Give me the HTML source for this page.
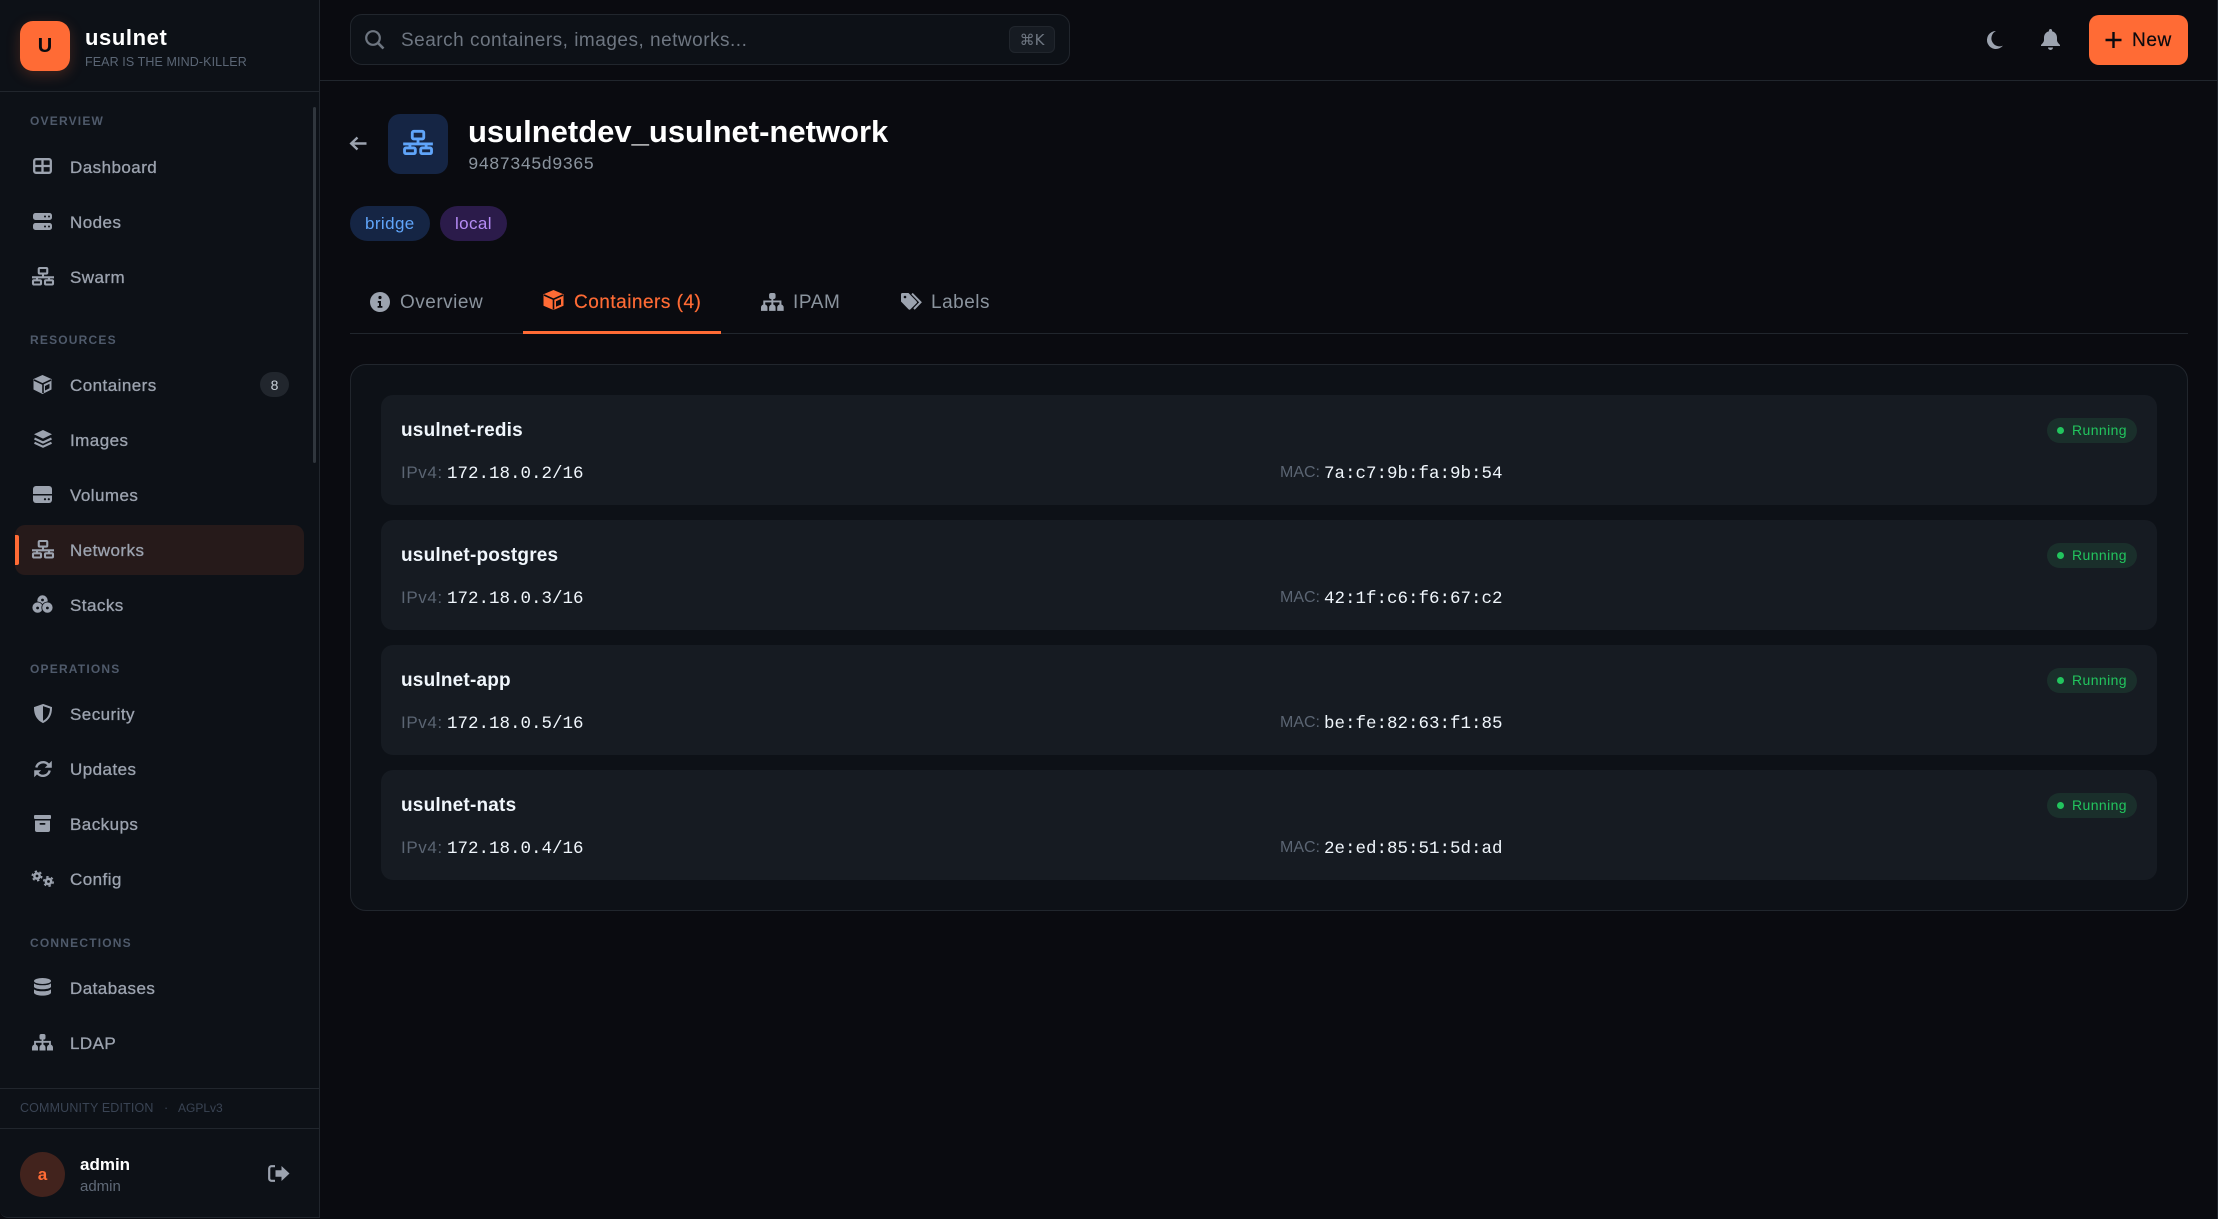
<!DOCTYPE html>
<html lang="en">
<head>
<meta charset="utf-8">
<title>usulnet</title>
<style>
*{box-sizing:border-box;margin:0;padding:0}
html,body{width:2218px;height:1219px;overflow:hidden;background:#0a0b10;font-family:"Liberation Sans",sans-serif;color:#9ca3af}
#app{position:relative;width:2218px;height:1219px;overflow:hidden}
.b{position:absolute}
.t{position:absolute;white-space:nowrap;line-height:24px;height:24px}
.nav{left:70px;font-size:17px;letter-spacing:.45px;color:#9ca3af;-webkit-text-stroke:.3px #9ca3af;margin-top:1px}
.sec{left:30px;font-size:12px;font-weight:700;letter-spacing:1.2px;color:#4f5a6b}
.tab{font-size:19px;color:#8b949e;margin-top:1px}
.name{left:401px;font-size:19px;font-weight:700;letter-spacing:.2px;color:#f0f6fc;margin-top:1px}
.lab{font-size:17px;letter-spacing:.6px;color:#5b6573}
.lab.m{font-size:16px;letter-spacing:0}
.mono{font-family:"Liberation Mono",monospace;font-size:17.5px;color:#f0f6fc;margin-top:1px}
.row{position:absolute;left:381px;width:1776px;height:110px;background:#161b22;border-radius:12px}
.pill{position:absolute;left:2047px;width:90px;height:25px;border-radius:13px;background:#1a2f2b}
.dot{position:absolute;left:2056.5px;width:7px;height:7px;border-radius:50%;background:#22c55e}
.run{left:2072px;font-size:14px;letter-spacing:.4px;color:#22c55e}
</style>
</head>
<body>
<div id="app">
  <!-- sidebar -->
  <aside class="b" style="left:0;top:0;width:320px;height:1218px;background:#0d1117;border-right:1px solid #21262d;border-bottom:1px solid #21262d;border-bottom-left-radius:8px"></aside>
  <div class="b" style="left:0;top:91px;width:319px;height:1px;background:#21262d"></div>
  <div class="b" style="left:0;top:1088px;width:319px;height:1px;background:#21262d"></div>
  <div class="b" style="left:0;top:1128px;width:319px;height:1px;background:#21262d"></div>
  <div class="b" style="left:313px;top:107px;width:3px;height:356px;background:#30363d;border-radius:2px"></div>

  <div class="b" style="left:20px;top:21px;width:50px;height:50px;border-radius:13px;background:#ff6b35;box-shadow:0 4px 14px rgba(255,107,53,.22)"></div>
  <div class="t" style="left:20px;top:34px;width:50px;text-align:center;font-size:20px;font-weight:700;color:#0a0a0f">U</div>
  <div class="t" style="left:85px;top:26px;font-size:22px;font-weight:700;letter-spacing:.6px;color:#fff">usulnet</div>
  <div class="t" style="left:85px;top:50px;font-size:12.5px;letter-spacing:.1px;color:#5b6675">FEAR IS THE MIND-KILLER</div>

  <div class="t sec" style="top:109px">OVERVIEW</div>
  <div class="t nav" style="top:155px">Dashboard</div>
  <div class="t nav" style="top:210px">Nodes</div>
  <div class="t nav" style="top:265px">Swarm</div>

  <div class="t sec" style="top:328px">RESOURCES</div>
  <div class="t nav" style="top:373px">Containers</div>
  <div class="b" style="left:260px;top:372px;width:29px;height:25px;border-radius:13px;background:#21262d"></div>
  <div class="t" style="left:260px;top:373px;width:29px;text-align:center;font-size:14px;color:#c9d1d9">8</div>
  <div class="t nav" style="top:428px">Images</div>
  <div class="t nav" style="top:483px">Volumes</div>
  <div class="b" style="left:15px;top:525px;width:289px;height:50px;border-radius:10px;background:#261a1a"></div>
  <div class="b" style="left:15px;top:535px;width:4px;height:30px;border-radius:0 2px 2px 0;background:#ff6b35"></div>
  <div class="t nav" style="top:538px">Networks</div>
  <div class="t nav" style="top:593px">Stacks</div>

  <div class="t sec" style="top:657px">OPERATIONS</div>
  <div class="t nav" style="top:702px">Security</div>
  <div class="t nav" style="top:757px">Updates</div>
  <div class="t nav" style="top:812px">Backups</div>
  <div class="t nav" style="top:867px">Config</div>

  <div class="t sec" style="top:931px">CONNECTIONS</div>
  <div class="t nav" style="top:976px">Databases</div>
  <div class="t nav" style="top:1031px">LDAP</div>

  <div class="t" style="left:20px;top:1096px;font-size:12.5px;letter-spacing:.15px;color:#3a4454">COMMUNITY EDITION</div>
  <div class="t" style="left:164px;top:1096px;font-size:12.5px;color:#3a4454">·</div>
  <div class="t" style="left:178px;top:1096px;font-size:12px;color:#3a4454">AGPLv3</div>

  <div class="b" style="left:20px;top:1152px;width:45px;height:45px;border-radius:50%;background:#42231d"></div>
  <div class="t" style="left:20px;top:1163px;width:45px;text-align:center;font-size:17px;font-weight:700;color:#ff6b35">a</div>
  <div class="t" style="left:80px;top:1153px;font-size:17px;font-weight:700;color:#fff">admin</div>
  <div class="t" style="left:80px;top:1175px;font-size:15px;color:#5f6977">admin</div>

  <!-- top bar -->
  <div class="b" style="left:320px;top:80px;width:1898px;height:1px;background:#21262d"></div>
  <div class="b" style="left:2217px;top:0;width:1px;height:1219px;background:#21262d"></div>
  <div class="b" style="left:350px;top:14px;width:720px;height:51px;border-radius:12px;background:#0d1117;border:1px solid #21262d"></div>
  <div class="t" style="left:401px;top:29px;font-size:19px;letter-spacing:.5px;color:#6e7681">Search containers, images, networks...</div>
  <div class="b" style="left:1009px;top:26px;width:46px;height:27px;border-radius:6px;background:#161b22;border:1px solid #21262d"></div>
  <div class="t" style="left:1009px;top:28px;width:46px;text-align:center;font-size:15px;font-family:'DejaVu Sans',sans-serif;color:#6e7681">⌘K</div>
  <div class="b" style="left:2089px;top:15px;width:99px;height:50px;border-radius:10px;background:#ff6b35"></div>
  <div class="t" style="left:2132px;top:29px;font-size:19px;letter-spacing:.6px;color:#0a0a0f;-webkit-text-stroke:.2px #0a0a0f">New</div>

  <!-- page header -->
  <div class="b" style="left:388px;top:114px;width:60px;height:60px;border-radius:12px;background:#152544"></div>
  <div class="t" style="left:468px;top:120px;font-size:31px;font-weight:700;color:#fff">usulnetdev_usulnet-network</div>
  <div class="t mono" style="left:468px;top:152px;color:#8b949e">9487345d9365</div>
  <div class="b" style="left:350px;top:206px;width:80px;height:35px;border-radius:18px;background:#152544"></div>
  <div class="t" style="left:365px;top:212px;font-size:17px;letter-spacing:.4px;color:#60a5fa">bridge</div>
  <div class="b" style="left:440px;top:206px;width:67px;height:35px;border-radius:18px;background:#2b1b4a"></div>
  <div class="t" style="left:455px;top:212px;font-size:17px;letter-spacing:.4px;color:#b68cf5">local</div>

  <!-- tabs -->
  <div class="b" style="left:350px;top:333px;width:1838px;height:1px;background:#21262d"></div>
  <div class="b" style="left:523px;top:331px;width:198px;height:3px;background:#ff6b35"></div>
  <div class="t tab" style="left:400px;top:290px;letter-spacing:.5px">Overview</div>
  <div class="t tab" style="left:574px;top:290px;letter-spacing:.5px;color:#ff6b35;-webkit-text-stroke:.2px #ff6b35">Containers (4)</div>
  <div class="t tab" style="left:793px;top:290px;letter-spacing:.6px">IPAM</div>
  <div class="t tab" style="left:931px;top:290px;letter-spacing:.5px">Labels</div>

  <!-- panel -->
  <div class="b" style="left:350px;top:364px;width:1838px;height:547px;border-radius:16px;background:#0d1117;border:1px solid #21262d"></div>

  <div class="row" style="top:395px"></div>
  <div class="t name" style="top:418px">usulnet-redis</div>
  <div class="pill" style="top:418px"></div><div class="dot" style="top:427px"></div><div class="t run" style="top:418px">Running</div>
  <div class="t lab" style="left:401px;top:461px">IPv4:</div><div class="t mono" style="left:447px;top:461px">172.18.0.2/16</div>
  <div class="t lab m" style="left:1280px;top:461px">MAC:</div><div class="t mono" style="left:1324px;top:461px">7a:c7:9b:fa:9b:54</div>

  <div class="row" style="top:520px"></div>
  <div class="t name" style="top:543px">usulnet-postgres</div>
  <div class="pill" style="top:543px"></div><div class="dot" style="top:552px"></div><div class="t run" style="top:543px">Running</div>
  <div class="t lab" style="left:401px;top:586px">IPv4:</div><div class="t mono" style="left:447px;top:586px">172.18.0.3/16</div>
  <div class="t lab m" style="left:1280px;top:586px">MAC:</div><div class="t mono" style="left:1324px;top:586px">42:1f:c6:f6:67:c2</div>

  <div class="row" style="top:645px"></div>
  <div class="t name" style="top:668px">usulnet-app</div>
  <div class="pill" style="top:668px"></div><div class="dot" style="top:677px"></div><div class="t run" style="top:668px">Running</div>
  <div class="t lab" style="left:401px;top:711px">IPv4:</div><div class="t mono" style="left:447px;top:711px">172.18.0.5/16</div>
  <div class="t lab m" style="left:1280px;top:711px">MAC:</div><div class="t mono" style="left:1324px;top:711px">be:fe:82:63:f1:85</div>

  <div class="row" style="top:770px"></div>
  <div class="t name" style="top:793px">usulnet-nats</div>
  <div class="pill" style="top:793px"></div><div class="dot" style="top:802px"></div><div class="t run" style="top:793px">Running</div>
  <div class="t lab" style="left:401px;top:836px">IPv4:</div><div class="t mono" style="left:447px;top:836px">172.18.0.4/16</div>
  <div class="t lab m" style="left:1280px;top:836px">MAC:</div><div class="t mono" style="left:1324px;top:836px">2e:ed:85:51:5d:ad</div>

  <!-- icons -->
  <svg class="b" style="left:0;top:0" width="2218" height="1219" viewBox="0 0 2218 1219" xmlns="http://www.w3.org/2000/svg">
    <defs>
      <g id="net" fill="none" stroke="currentColor" stroke-width="2.1">
        <rect x="7.25" y="1" width="8.5" height="5.6" rx="1"/>
        <path d="M11.5 6.6V10.3M.5 10.3H22.5M5.5 10.3V13M17.5 10.3V13"/>
        <rect x="1.5" y="13.3" width="8" height="4.2" rx="1"/>
        <rect x="13.5" y="13.3" width="8" height="4.2" rx="1"/>
      </g>
      <g id="site" fill="currentColor">
        <path d="M10.5 4V11M3 11V7.8H18V11" fill="none" stroke="currentColor" stroke-width="1.8"/>
        <rect x="7.5" y="0" width="6" height="5.5" rx="1.8"/>
        <path d="M0 16.5V13.5A3 3 0 0 1 6 13.5V16.5ZM7.5 16.5V13.5A3 3 0 0 1 13.5 13.5V16.5ZM15 16.5V13.5A3 3 0 0 1 21 13.5V16.5Z"/>
      </g>
    </defs>
    <g color="#9ca3af">
      <!-- dashboard -->
      <g transform="translate(33,158)" fill="none" stroke="currentColor" stroke-width="2.3"><rect x="1.2" y="1.2" width="16.6" height="13.6" rx="1.8"/><path d="M9.5 1V15M1 8H18"/></g>
      <!-- nodes -->
      <g transform="translate(33,213)"><rect width="19" height="7" rx="2.5" fill="currentColor"/><rect y="10" width="19" height="7" rx="2.5" fill="currentColor"/><circle cx="12" cy="3.5" r="1" fill="#0d1117"/><circle cx="16" cy="3.5" r="1" fill="#0d1117"/><circle cx="12" cy="13.5" r="1" fill="#0d1117"/><circle cx="16" cy="13.5" r="1" fill="#0d1117"/></g>
      <use href="#net" x="31.5" y="267"/>
      <!-- cube -->
      <g transform="translate(33,375)"><path d="M9.5 0L18.5 4V14.5L9.5 19L.5 14.5V4Z" fill="currentColor"/><path d="M1 5L9.5 9L18 5M10 9V18" fill="none" stroke="#0d1117" stroke-width="1.6"/><path d="M12 11L16.5 8.8V13.2L12 15.5Z" fill="#0d1117"/></g>
      <!-- layers -->
      <g transform="translate(34,430)"><path d="M9 0L18 4.3L9 8.6L0 4.3Z" fill="currentColor"/><path d="M.5 8.5L9 12.5L17.5 8.5M.5 12.7L9 16.7L17.5 12.7" fill="none" stroke="currentColor" stroke-width="2.2"/></g>
      <!-- volumes -->
      <g transform="translate(33,486)"><path d="M3 0H16A3 3 0 0 1 19 3V8H0V3A3 3 0 0 1 3 0Z" fill="currentColor"/><path d="M0 9.5H19V14A3 3 0 0 1 16 17H3A3 3 0 0 1 0 14Z" fill="currentColor"/><circle cx="12" cy="13.2" r="1.1" fill="#0d1117"/><circle cx="15.8" cy="13.2" r="1.1" fill="#0d1117"/></g>
      <use href="#net" x="31.5" y="540"/>
      <!-- stacks -->
      <g transform="translate(32,595)" fill="currentColor" stroke="#0d1117" stroke-width=".8"><circle cx="10.5" cy="5.5" r="5.6"/><circle cx="5.6" cy="12.6" r="5.6"/><circle cx="15.4" cy="12.6" r="5.6"/><circle cx="10.5" cy="5" r="1.4" fill="#0d1117" stroke="none"/><circle cx="5.6" cy="13" r="1.4" fill="#0d1117" stroke="none"/><circle cx="15.4" cy="13" r="1.4" fill="#0d1117" stroke="none"/></g>
      <!-- shield -->
      <g transform="translate(34,704)"><path d="M9 1L17 3.8C17 10 15 15 9 18C3 15 1 10 1 3.8Z" fill="none" stroke="currentColor" stroke-width="2"/><path d="M9 1L1 3.8C1 10 3 15 9 18Z" fill="currentColor"/></g>
      <!-- updates -->
      <g transform="translate(34,760)" fill="currentColor"><path d="M2.3 7.5A7 7 0 0 1 14 4.2L15.8 6M15.7 10.5A7 7 0 0 1 4 13.8L2.2 12" fill="none" stroke="currentColor" stroke-width="2.4"/><path d="M17.8 .8V7.8H10.8ZM.2 17.2V10.2H7.2Z"/></g>
      <!-- backups -->
      <g transform="translate(34,815)" fill="currentColor"><rect width="17" height="4" rx="1"/><path d="M1 5.5H16V15A2 2 0 0 1 14 17H3A2 2 0 0 1 1 15Z"/><rect x="5.5" y="8" width="6" height="1.8" rx=".9" fill="#0d1117"/></g>
      <!-- config -->
      <g transform="translate(31,869)"><circle cx="6" cy="7" r="3.9" fill="currentColor"/><circle cx="6" cy="7" r="4.7" fill="none" stroke="currentColor" stroke-width="1.6" stroke-dasharray="2.4 2.52"/><circle cx="6" cy="7" r="1.4" fill="#0d1117"/><circle cx="17.5" cy="12.5" r="3.9" fill="currentColor"/><circle cx="17.5" cy="12.5" r="4.7" fill="none" stroke="currentColor" stroke-width="1.6" stroke-dasharray="2.4 2.52"/><circle cx="17.5" cy="12.5" r="1.4" fill="#0d1117"/></g>
      <!-- database -->
      <g transform="translate(34,978)" fill="currentColor"><ellipse cx="8.5" cy="3" rx="8.5" ry="3"/><path d="M0 5.2C2 8 15 8 17 5.2V9C15 12 2 12 0 9Z"/><path d="M0 11.2C2 14 15 14 17 11.2V15C15 18.5 2 18.5 0 15Z"/></g>
      <use href="#site" x="32" y="1034"/>
      <!-- logout -->
      <g transform="translate(268,1165)"><path d="M7 1.2H3.5A2.3 2.3 0 0 0 1.2 3.5V13.5A2.3 2.3 0 0 0 3.5 15.8H7" fill="none" stroke="currentColor" stroke-width="2.2"/><path d="M21.5 8.5L13.5 1V5.3H7.5V11.7H13.5V16Z" fill="currentColor"/></g>
      <!-- moon -->
      <path transform="translate(1986,31)" d="M10 0A9 9 0 1 0 17 14.6A7.6 7.6 0 0 1 10 0Z" fill="currentColor"/>
      <!-- bell -->
      <path transform="translate(2041,29)" d="M9.5 0A1.6 1.6 0 0 1 11 2.2C14.2 3 16 5.5 16 8.8V11C16 13 17.5 14.3 19 16V17H0V16C1.5 14.3 3 13 3 11V8.8C3 5.5 4.8 3 8 2.2A1.6 1.6 0 0 1 9.5 0ZM7 18.5H12A2.5 2.5 0 0 1 7 18.5Z" fill="currentColor"/>
      <!-- back -->
      <path transform="translate(349,136)" d="M17.5 7.5H2.5M8.5 1.5L2.2 7.5L8.5 13.5" fill="none" stroke="currentColor" stroke-width="2.4"/>
      <!-- info -->
      <g transform="translate(370,292)"><circle cx="10" cy="10" r="10" fill="currentColor"/><circle cx="10" cy="5.5" r="1.6" fill="#0a0b10"/><path d="M7.8 9H11V14H12.4V15.8H7.6V14H9V10.8H7.8Z" fill="#0a0b10"/></g>
      <use href="#site" transform="translate(761,293) scale(1.08)"/>
      <!-- tags -->
      <g transform="translate(901,293)" fill="currentColor"><path d="M0 1.5A1.5 1.5 0 0 1 1.5 0H7.5L15.5 8.3A1.5 1.5 0 0 1 15.5 10.3L9.5 16.3A1.5 1.5 0 0 1 7.5 16.3L0 8.5Z"/><circle cx="4" cy="4" r="1.3" fill="#0a0b10"/><path d="M11 .6L19.5 9.3L13 16" fill="none" stroke="currentColor" stroke-width="2"/></g>
      <!-- search -->
      <g transform="translate(365,30)" fill="none" stroke="#6e7681" stroke-width="2.2"><circle cx="8" cy="8" r="6.8"/><path d="M13 13L18.5 18.5" stroke-width="2.6"/></g>
    </g>
    <!-- plus -->
    <path d="M2113.5 32V48M2105.5 40H2121.5" fill="none" stroke="#0a0a0f" stroke-width="2.4"/>
    <use href="#net" transform="translate(402.5,130) scale(1.35)" color="#60a5fa"/>
    <!-- orange cube -->
    <g transform="translate(543,290)"><path d="M10.5 0L20.5 4.2V15.8L10.5 20L.5 15.8V4.2Z" fill="#ff6b35"/><path d="M1 5L10.5 9.2L20 5M10.5 9.2V19.5" fill="none" stroke="#0a0b10" stroke-width="1.6"/><path d="M13 11.2L18 9V14.6L13 16.8Z" fill="#0a0b10"/></g>
  </svg>
</div>
</body>
</html>
